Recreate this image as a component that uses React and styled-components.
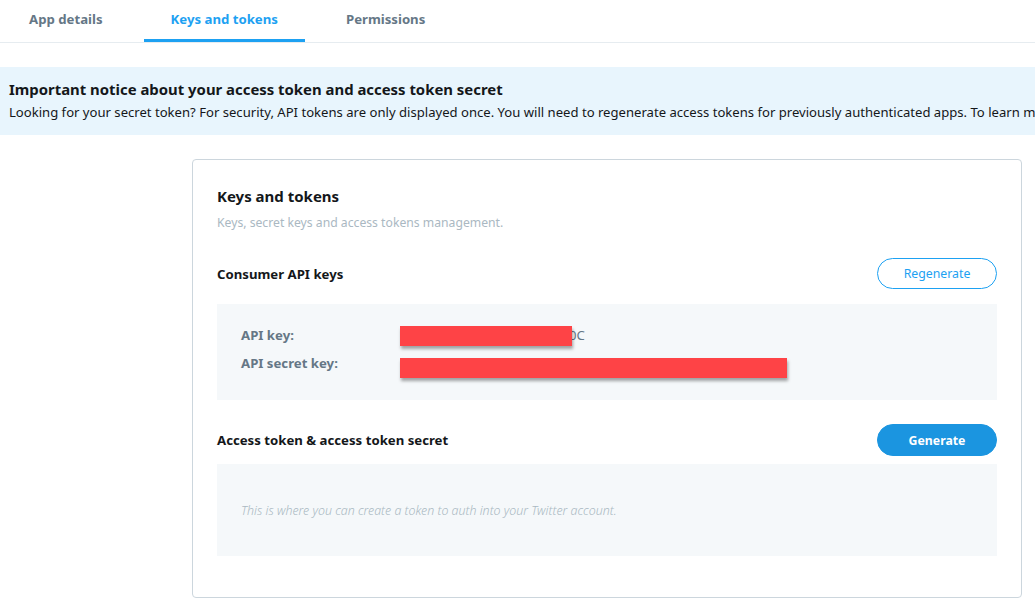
import styled, { createGlobalStyle } from 'styled-components';

const GlobalStyle = createGlobalStyle`
  html, body {
    margin: 0;
    padding: 0;
    background: #ffffff;
    font-family: "Noto Sans", "Open Sans", Arial, sans-serif;
    color: #14171a;
  }
  * { box-sizing: border-box; }
`;

const tabs = [
  { label: 'App details', active: false },
  { label: 'Keys and tokens', active: true },
  { label: 'Permissions', active: false },
];

const App = () => {
  return (
    <>
      <GlobalStyle />
      <TabBar>
        {tabs.map((t) => (
          <Tab key={t.label} $active={t.active}>{t.label}</Tab>
        ))}
      </TabBar>

      <Notice>
        <NoticeTitle>Important notice about your access token and access token secret</NoticeTitle>
        <NoticeText>
          Looking for your secret token? For security, API tokens are only displayed once. You will need to regenerate access tokens for previously authenticated apps. To learn more, read our documentation.
        </NoticeText>
      </Notice>

      <Main>
        <Card>
          <CardTitle>Keys and tokens</CardTitle>
          <CardSubtitle>Keys, secret keys and access tokens management.</CardSubtitle>

          <SectionHead>
            <SectionTitle>Consumer API keys</SectionTitle>
            <Button $primary={false}>Regenerate</Button>
          </SectionHead>
          <KeyBox>
            <KeyRow>
              <KeyLabel>API key:</KeyLabel>
              <KeyValue>
                <Redacted $width={172} $shift={1} />
                <Tail>0C</Tail>
              </KeyValue>
            </KeyRow>
            <KeyRow>
              <KeyLabel>API secret key:</KeyLabel>
              <KeyValue>
                <Redacted $width={387} $shift={5} />
              </KeyValue>
            </KeyRow>
          </KeyBox>

          <SectionHead $second>
            <SectionTitle>Access token &amp; access token secret</SectionTitle>
            <Button $primary>Generate</Button>
          </SectionHead>
          <EmptyBox>
            <EmptyText>This is where you can create a token to auth into your Twitter account.</EmptyText>
          </EmptyBox>
        </Card>
      </Main>
    </>
  );
};

const TabBar = styled.nav`
  display: flex;
  gap: 14px;
  height: 43px;
  border-bottom: 1px solid #e6ecf0;
  padding-left: 2px;
`;

const Tab = styled.div`
  display: flex;
  align-items: center;
  justify-content: center;
  padding: 0 27px 2px;
  height: 42px;
  font-size: 13.2px;
  font-weight: 700;
  color: ${(p) => (p.$active ? '#1da1f2' : '#657786')};
  border-bottom: 3px solid ${(p) => (p.$active ? '#1da1f2' : 'transparent')};
  margin-bottom: -1px;
`;

const Notice = styled.section`
  margin-top: 24px;
  background: #e8f5fd;
  padding: 11px 9px 13px;
  height: 68px;
  overflow: hidden;
`;

const NoticeTitle = styled.h3`
  margin: 0;
  font-size: 14.9px;
  font-weight: 700;
  line-height: 22px;
  color: #14171a;
`;

const NoticeText = styled.p`
  margin: 2px 0 0;
  font-size: 13.1px;
  line-height: 20px;
  white-space: nowrap;
  color: #14171a;
`;

const Main = styled.main`
  padding: 24px 13px 0 192px;
`;

const Card = styled.div`
  border: 1px solid #ccd6dd;
  border-radius: 4px;
  padding: 25px 24px 40px;
  height: 439px;
`;

const CardTitle = styled.h2`
  margin: 0;
  font-size: 15px;
  font-weight: 700;
  line-height: 22px;
  color: #14171a;
`;

const CardSubtitle = styled.p`
  margin: 7px 0 0;
  font-size: 12.2px;
  line-height: 18px;
  color: #aab8c2;
`;

const SectionHead = styled.div`
  display: flex;
  align-items: center;
  justify-content: space-between;
  margin-top: ${(p) => (p.$second ? '24px' : '26px')};
  margin-bottom: ${(p) => (p.$second ? '8px' : '15px')};
`;

const SectionTitle = styled.h4`
  margin: 0;
  font-size: 13.2px;
  font-weight: 700;
  color: #14171a;
`;

const Button = styled.button`
  width: 120px;
  height: ${(p) => (p.$primary ? '32px' : '31px')};
  border-radius: 999px;
  font-family: inherit;
  font-size: 12.3px;
  font-weight: ${(p) => (p.$primary ? 700 : 400)};
  border: 1px solid ${(p) => (p.$primary ? '#1b95e0' : '#1da1f2')};
  background: ${(p) => (p.$primary ? '#1b95e0' : '#ffffff')};
  color: ${(p) => (p.$primary ? '#ffffff' : '#1da1f2')};
  cursor: pointer;
`;

const KeyBox = styled.div`
  background: #f5f8fa;
  height: 96px;
  padding: 20px 24px;
  display: flex;
  flex-direction: column;
  gap: 7px;
`;

const KeyRow = styled.div`
  display: flex;
  align-items: center;
  height: 21px;
`;

const KeyLabel = styled.span`
  width: 159px;
  font-size: 13.2px;
  font-weight: 700;
  color: #657786;
`;

const KeyValue = styled.span`
  display: flex;
  align-items: center;
`;

const Redacted = styled.span`
  display: inline-block;
  position: relative;
  top: ${(p) => p.$shift}px;
  width: ${(p) => p.$width}px;
  height: 20px;
  background: #fe4346;
  box-shadow: 1px 3px 3px rgba(0, 0, 0, 0.35);
`;

const Tail = styled.span`
  font-size: 13.2px;
  color: #657786;
  margin-left: -3px;
`;

const EmptyBox = styled.div`
  background: #f5f8fa;
  height: 92px;
  padding: 0 24px;
  display: flex;
  align-items: center;
`;

const EmptyText = styled.p`
  margin: 0;
  font-size: 12.4px;
  font-style: italic;
  font-weight: 300;
  color: #aab8c2;
`;

export default App;
